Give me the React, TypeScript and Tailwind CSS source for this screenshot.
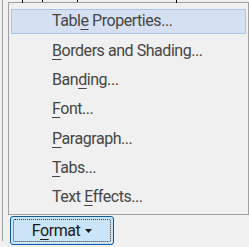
const items: { pre: string; key: string; post: string; active?: boolean }[] = [
  { pre: "Tabl", key: "e", post: " Properties...", active: true },
  { pre: "", key: "B", post: "orders and Shading..." },
  { pre: "Ban", key: "d", post: "ing..." },
  { pre: "", key: "F", post: "ont..." },
  { pre: "", key: "P", post: "aragraph..." },
  { pre: "", key: "T", post: "abs..." },
  { pre: "Text ", key: "E", post: "ffects..." },
];

export default function App() {
  return (
    <div
      className="relative h-[247px] w-[249px] overflow-hidden bg-[#f0f0f0] text-[#454545]"
      style={{ fontFamily: 'Roboto, "Noto Sans", sans-serif' }}
    >
      {/* dialog edge behind the menu */}
      <div className="absolute left-[2px] top-0 h-[241px] w-px bg-[#a0a0a0]" />
      {/* table fragments peeking above the menu */}
      <div className="absolute left-[22px] top-0 h-[3px] w-px bg-black" />
      <div className="absolute left-[42px] top-0 h-[2px] w-[36px] border-x border-black" />
      <div className="absolute left-[176px] top-0 h-[3px] w-[38px] border-l border-black" />

      <div className="flex flex-col pl-[8px] pt-[2px]">
        {/* Menu */}
        <div className="flex h-[213px] w-[241px] flex-col border border-[#a0a0a0] bg-[#f0f0f0] px-[2px] pt-[6px]">
          {items.map((it, i) => (
            <div
              key={i}
              className={
                "mb-[4.5px] flex h-[25px] items-center pl-[40px] text-[16px] leading-none tracking-[-0.45px] " +
                (it.active ? "border border-[#a8c4ea] bg-[#d5e1f2]" : "border border-transparent")
              }
            >
              <span className="whitespace-pre">
                {it.pre}
                <span className="underline decoration-1 underline-offset-[3px]">{it.key}</span>
                {it.post}
              </span>
            </div>
          ))}
        </div>

        {/* Format button */}
        <div className="ml-[2px] mt-[1px] flex h-[29px] w-[104px] items-center justify-center rounded-[3px] border border-[#0a5a9c] bg-[#cce4f7] p-[2px]">
          <div className="flex h-full w-full items-center justify-center gap-[5px] rounded-[2px] border border-dotted border-[#3a3a3a] pt-[1px] text-[16px] tracking-[-0.45px] text-[#1a1a1a]">
            <span>
              F<span className="underline decoration-1 underline-offset-[3px]">o</span>rmat
            </span>
            <svg width="7" height="4" viewBox="0 0 7 4">
              <path d="M0 0h7L3.5 4z" fill="#1a1a1a" />
            </svg>
          </div>
        </div>
      </div>
    </div>
  );
}
